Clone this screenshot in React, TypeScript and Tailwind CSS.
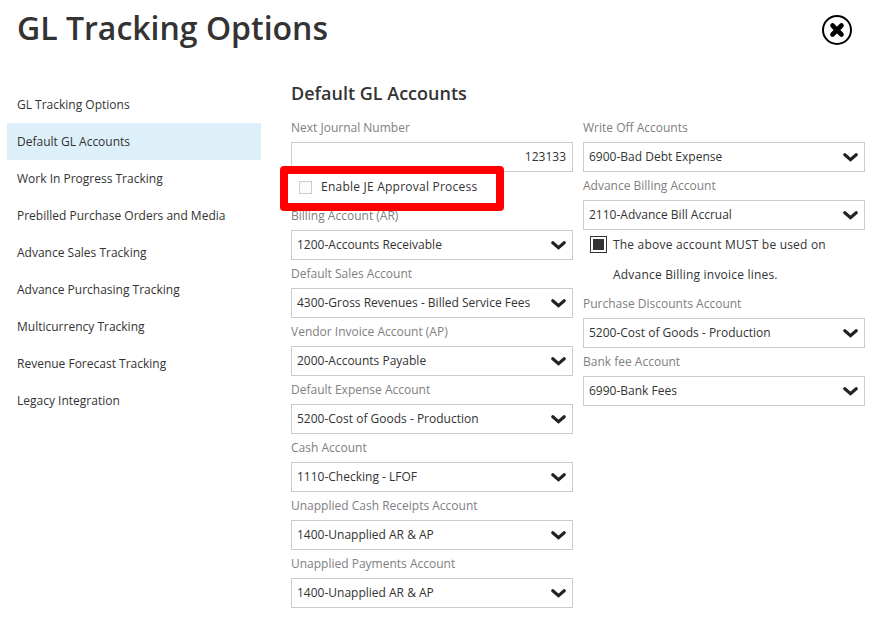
const navItems = [
  "GL Tracking Options",
  "Default GL Accounts",
  "Work In Progress Tracking",
  "Prebilled Purchase Orders and Media",
  "Advance Sales Tracking",
  "Advance Purchasing Tracking",
  "Multicurrency Tracking",
  "Revenue Forecast Tracking",
  "Legacy Integration",
];

const leftFields = [
  ["Default Sales Account", "4300-Gross Revenues - Billed Service Fees"],
  ["Vendor Invoice Account (AP)", "2000-Accounts Payable"],
  ["Default Expense Account", "5200-Cost of Goods - Production"],
  ["Cash Account", "1110-Checking - LFOF"],
  ["Unapplied Cash Receipts Account", "1400-Unapplied AR & AP"],
  ["Unapplied Payments Account", "1400-Unapplied AR & AP"],
];

function Label({ text }: { text: string }) {
  return <div className="h-[28px] leading-[27px] text-[12px] text-[#808080]">{text}</div>;
}

function Chevron() {
  return (
    <svg width="15" height="9" viewBox="0 0 15 9" className="mr-[1px]">
      <path d="M1.8 1.8 L7.5 6.6 L13.2 1.8" fill="none" stroke="#222222" strokeWidth="3.2" strokeLinecap="round" strokeLinejoin="miter" />
    </svg>
  );
}

function Select({ value }: { value: string }) {
  return (
    <div className="h-[30px] flex items-center justify-between border border-[#cccccc] px-[5px] text-[12px] text-[#333333]">
      <span>{value}</span>
      <Chevron />
    </div>
  );
}

function Field({ label, value }: { label: string; value: string }) {
  return (
    <div>
      <Label text={label} />
      <Select value={value} />
    </div>
  );
}

export default function App() {
  return (
    <div className="relative w-[887px] h-[626px] overflow-hidden bg-white font-['Open_Sans',sans-serif] text-[#333333]">
      <div className="flex items-center justify-between pl-[17px] pr-[35px] h-[58px]">
        <h1 className="text-[32px] font-semibold leading-none text-[#333333] mb-[2px]">GL Tracking Options</h1>
        <button className="w-[30px] h-[30px] mt-[2px] rounded-full border-2 border-black flex items-center justify-center">
          <svg width="16" height="16" viewBox="0 0 16 16">
            <path d="M3.5 3.5 L12.5 12.5 M12.5 3.5 L3.5 12.5" stroke="black" strokeWidth="4.6" strokeLinecap="round" />
          </svg>
        </button>
      </div>

      <div className="flex pl-[7px] pt-[14px]">
        <nav className="w-[254px] pt-[14px] shrink-0">
          {navItems.map((item) => (
            <div
              key={item}
              className={`h-[37px] flex items-center pl-[10px] text-[12px] text-[#333333] ${
                item === "Default GL Accounts" ? "bg-[#ddeff9]" : ""
              }`}
            >
              {item}
            </div>
          ))}
        </nav>

        <main className="ml-[30px] w-[574px]">
          <h2 className="h-[42px] leading-[42px] text-[18px] font-semibold text-[#333333]">Default GL Accounts</h2>
          <div className="flex gap-[10px]">
            <div className="w-[282px]">
              <Label text="Next Journal Number" />
              <div className="h-[30px] flex items-center justify-end border border-[#cccccc] px-[6px] text-[12px]">123133</div>
              <div className="h-[30px] flex items-center pl-[8px]">
                <span className="w-[13px] h-[13px] border border-[#cccccc] bg-[#fafafa]" />
                <span className="ml-[9px] text-[12px] tracking-[0.23px] text-[#333333]">Enable JE Approval Process</span>
              </div>
              <Field label="Billing Account (AR)" value="1200-Accounts Receivable" />
              {leftFields.map(([label, value]) => (
                <Field key={label} label={label} value={value} />
              ))}
            </div>

            <div className="w-[282px]">
              <Field label="Write Off Accounts" value="6900-Bad Debt Expense" />
              <Field label="Advance Billing Account" value="2110-Advance Bill Accrual" />
              <div className="flex pl-[7px] h-[60px]">
                <span className="mt-[6px] w-[17px] h-[17px] border border-[#333333] p-[2px] shrink-0">
                  <span className="block w-full h-full bg-[#333333]" />
                </span>
                <p className="ml-[6px] text-[12px] leading-[30px] tracking-[0.2px] text-[#333333]">
                  The above account MUST be used on
                  <br />
                  Advance Billing invoice lines.
                </p>
              </div>
              <Field label="Purchase Discounts Account" value="5200-Cost of Goods - Production" />
              <Field label="Bank fee Account" value="6990-Bank Fees" />
            </div>
          </div>
        </main>
      </div>

      <div className="absolute left-[280px] top-[166px] w-[224px] h-[45px] border-[8px] border-[#ff0000] rounded-[4px]" />
    </div>
  );
}
